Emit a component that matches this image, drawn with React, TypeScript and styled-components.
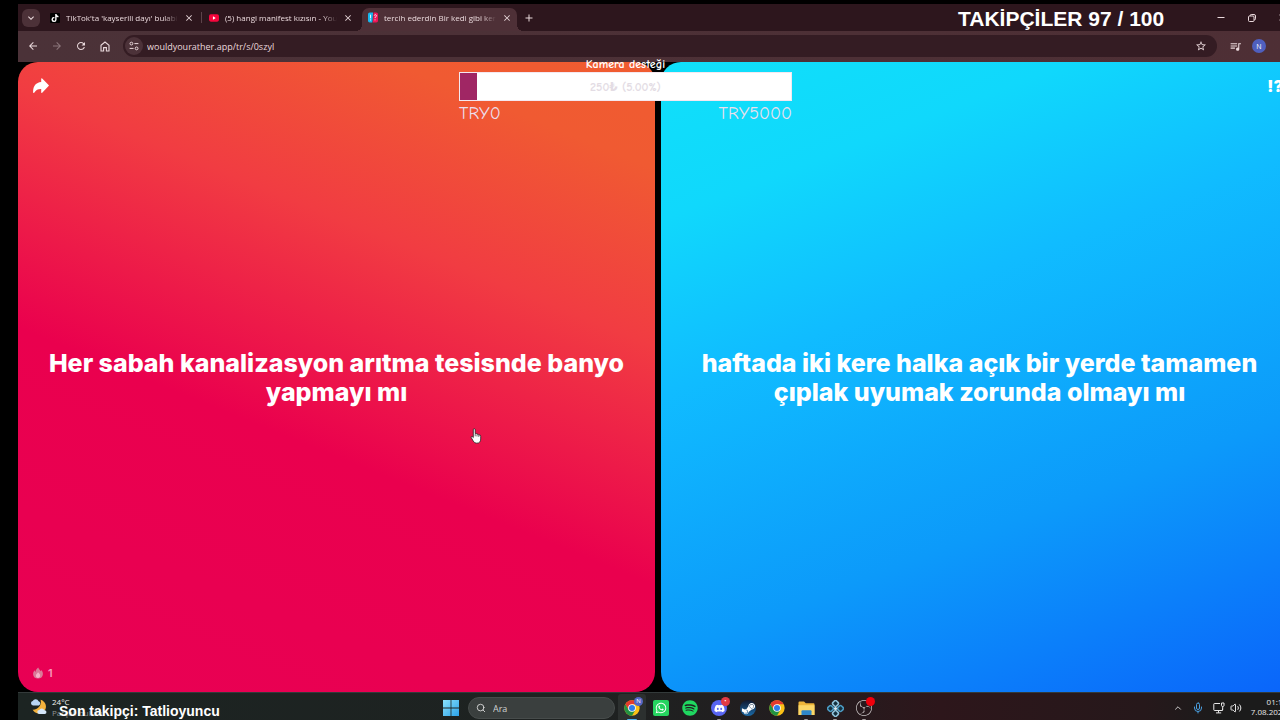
import React from "react";
import styled, { createGlobalStyle, css } from "styled-components";
import {
  MdArrowBack,
  MdArrowForward,
  MdRefresh,
  MdStarBorder,
  MdQueueMusic,
  MdClose,
  MdAdd,
  MdExpandMore,
  MdMoreVert,
} from "react-icons/md";
import { FaTiktok, FaWhatsapp, FaSpotify, FaDiscord, FaSteamSymbol } from "react-icons/fa";
import { SiObsstudio } from "react-icons/si";
import { ChevronUp, Mic, Volume2, Search } from "lucide-react";

const GlobalStyle = createGlobalStyle`
  * { box-sizing: border-box; }
  body { margin: 0; background: #000; overflow: hidden; }
  button, input { font: inherit; color: inherit; border: 0; padding: 0; margin: 0; background: none; }
  button { cursor: pointer; }
  p, h2 { margin: 0; }
  svg { display: block; flex: none; }
`;

const uiFont = `"Open Sans", "Noto Sans", sans-serif`;

const Stage = styled.div`
  position: relative;
  height: 100vh;
  padding: 4px 0 0 18px;
  overflow: hidden;
  background: #000;
`;

const Desktop = styled.div`
  display: grid;
  grid-template-rows: 27px 31px 1fr 32px;
  width: 100vw;
  height: 100vh;
  font-family: ${uiFont};
  color: #ead9dc;
`;

/* ---------- browser ---------- */

const TabStrip = styled.header`
  display: flex;
  align-items: center;
  padding-left: 4px;
  background: #2d161d;
`;

const TabSearch = styled.button`
  display: grid;
  place-items: center;
  width: 18px;
  height: 18px;
  border-radius: 6px;
  background: #4c3138;
`;

const Tabs = styled.nav`
  display: flex;
  align-self: flex-end;
  gap: 4px;
  margin-left: 4px;
`;

const Tab = styled.div<{ $active?: boolean; $divider?: boolean }>`
  position: relative;
  display: flex;
  align-items: center;
  gap: 6px;
  width: 155px;
  height: 23px;
  padding: 0 5px 4px 6px;
  border-radius: 7px 7px 0 0;
  ${(p) =>
    p.$active &&
    css`
      background: #4e3037;
      &::before,
      &::after {
        content: "";
        position: absolute;
        bottom: 0;
        width: 6px;
        height: 6px;
      }
      &::before {
        right: 100%;
        background: radial-gradient(circle at 0 0, transparent 6px, #4e3037 6px);
      }
      &::after {
        left: 100%;
        background: radial-gradient(circle at 100% 0, transparent 6px, #4e3037 6px);
      }
    `}
  ${(p) =>
    p.$divider &&
    css`
      &::after {
        content: "";
        position: absolute;
        right: -3px;
        top: 4px;
        width: 1px;
        height: 11px;
        background: #5d434a;
      }
    `}
`;

const TabTitle = styled.button`
  flex: 1;
  min-width: 0;
  overflow: hidden;
  white-space: nowrap;
  text-align: left;
  font-size: 8px;
  line-height: 14px;
  mask-image: linear-gradient(90deg, #000 88%, transparent);
`;

const IconButton = styled.button<{ $width?: number; $dim?: boolean }>`
  display: grid;
  place-items: center;
  flex: none;
  width: ${(p) => p.$width ?? 24}px;
  height: 20px;
  opacity: ${(p) => (p.$dim ? 0.4 : 1)};
`;

const WindowControls = styled.div`
  display: flex;
  margin-left: auto;
`;

const Toolbar = styled.div`
  display: flex;
  align-items: center;
  padding: 0 3px 1px;
  background: linear-gradient(90deg, #4b3238, #4e2f35);
`;

const AddressBar = styled.label`
  display: flex;
  align-items: center;
  flex: 1;
  height: 22px;
  margin: 0 6px;
  padding: 0 4px 0 2px;
  border-radius: 11px;
  background: #341c23;
`;

const SiteInfo = styled.button`
  display: grid;
  place-items: center;
  width: 18px;
  height: 18px;
  border-radius: 50%;
  background: #4c3239;
`;

const Address = styled.input`
  flex: 1;
  min-width: 0;
  margin-left: 4px;
  font-size: 9px;
  outline: 0;
`;

const Avatar = styled.span`
  display: grid;
  place-items: center;
  width: 14px;
  height: 14px;
  border-radius: 50%;
  background: #4f5fbe;
  font-size: 7px;
  color: #fff;
`;

/* ---------- page ---------- */

const Page = styled.main`
  display: grid;
  grid-template-columns: 1fr 1fr;
  gap: 6px;
  min-height: 0;
  background: #000;
`;

const Choice = styled.section<{ $side: "red" | "blue" }>`
  display: grid;
  grid-template-rows: 48px 1fr 46px;
  padding: 0 15px;
  border-radius: 20px;
  background: ${(p) =>
    p.$side === "red"
      ? "linear-gradient(202deg, #f05c30 0%, #f05a32 12%, #f13c42 32%, #ea004e 59%, #e80054 100%)"
      : "linear-gradient(159deg, #10e0fa 0%, #10d8fc 18%, #10bcff 38%, #0c9afa 68%, #0a64fa 100%)"};
  color: #fff;
  font-family: Inter, sans-serif;
`;

const CornerButton = styled.button<{ $end?: boolean }>`
  align-self: center;
  justify-self: ${(p) => (p.$end ? "end" : "start")};
  height: 18px;
  font-size: 16px;
  font-weight: 900;
  line-height: 18px;
`;

const Question = styled.button`
  width: 100%;
  padding: 0 8px;
  font-size: 25px;
  font-weight: 800;
  line-height: 29px;
  text-align: center;
`;

const Votes = styled.p`
  display: flex;
  align-items: center;
  gap: 5px;
  height: 20px;
  align-self: center;
  margin-top: 8px;
  font-size: 11px;
  font-weight: 600;
  color: #f79abb;
`;

/* ---------- taskbar ---------- */

const Taskbar = styled.footer`
  display: grid;
  grid-template-columns: 1fr auto 1fr;
  align-items: center;
  padding: 0 11px 0 10px;
  box-shadow: inset 0 1px #333a3a;
  background: linear-gradient(90deg, #1c2422 0%, #1e2221 45%, #221d1f 60%, #2d161b 72%, #26181b 88%, #1b1b1b 94%);
`;

const Weather = styled.div`
  display: flex;
  align-items: center;
  gap: 5px;
  padding: 0 0 2px 2px;
`;

const WeatherText = styled.div`
  font-size: 8px;
  line-height: 11px;
  color: #f0f0f0;
  small {
    display: block;
    font-size: 8px;
    color: #8f9493;
  }
`;

const Apps = styled.div`
  display: flex;
  align-items: center;
  gap: 1px;
`;

const AppButton = styled.button<{ $focused?: boolean; $running?: boolean }>`
  position: relative;
  display: grid;
  place-items: center;
  width: 28px;
  height: 28px;
  border-radius: 3px;
  background: ${(p) => (p.$focused ? "#2c302f" : "transparent")};
  &::after {
    content: "";
    display: ${(p) => (p.$focused || p.$running ? "block" : "none")};
    position: absolute;
    bottom: 1px;
    width: ${(p) => (p.$focused ? 10 : 4)}px;
    height: 2px;
    border-radius: 1px;
    background: ${(p) => (p.$focused ? "#4cb4f0" : "#a09a9a")};
  }
`;

const SearchBox = styled.label`
  display: flex;
  align-items: center;
  gap: 7px;
  width: 147px;
  height: 22px;
  margin: 0 2px;
  padding: 0 7px;
  border: 1px solid #474c4b;
  border-radius: 11px;
  background: #3a3f3e;
  color: #e4e4e4;
  input {
    width: 100%;
    font-size: 9px;
    outline: 0;
  }
  input::placeholder {
    color: #d0d2d2;
  }
`;

const Badge = styled.span<{ $color: string }>`
  position: absolute;
  top: 3px;
  right: 3px;
  display: grid;
  place-items: center;
  width: 9px;
  height: 9px;
  border-radius: 50%;
  background: ${(p) => p.$color};
  font-size: 6px;
  line-height: 9px;
  color: #fff;
`;

const Tile = styled.span<{ $bg: string; $round?: boolean }>`
  display: grid;
  place-items: center;
  width: 16px;
  height: 16px;
  border-radius: ${(p) => (p.$round ? "50%" : "2px")};
  background: ${(p) => p.$bg};
  color: #fff;
`;

const Tray = styled.div`
  display: flex;
  align-items: center;
  justify-content: flex-end;
  gap: 9px;
  color: #e8e8e8;
`;

const TrayPair = styled.div`
  display: flex;
  align-items: center;
  gap: 5px;
`;

const Clock = styled.time`
  padding-bottom: 2px;
  font-size: 8px;
  line-height: 10px;
  text-align: right;
`;

/* ---------- stream overlays ---------- */

const FollowerGoal = styled.h2`
  position: absolute;
  top: 7px;
  left: 958px;
  font: 700 21px/24px "Liberation Sans", Arial, sans-serif;
  color: #fff;
`;

const LatestFollower = styled.p`
  position: absolute;
  top: 703px;
  left: 59px;
  font: 700 14px/16px "Liberation Sans", Arial, sans-serif;
  color: #fff;
`;

const Goal = styled.section`
  position: absolute;
  top: 58px;
  left: 459px;
  width: 333px;
  font-family: "Comic Sans MS", "Comic Neue", "DejaVu Sans", sans-serif;
  color: #ecdfec;
`;

const GoalTitle = styled.h2`
  height: 14px;
  font-size: 12px;
  font-weight: 700;
  line-height: 13px;
  text-align: center;
  color: #fff;
`;

const GoalTrack = styled.div`
  position: relative;
  display: grid;
  place-items: center;
  height: 29px;
  border: 1px solid #f4e8f0;
  background: #fff;
  font-size: 12px;
  font-weight: 700;
  color: #e3dce4;
`;

const GoalFill = styled.div`
  position: absolute;
  inset: 0 auto 0 0;
  background: #a02664;
`;

const GoalRange = styled.div`
  display: flex;
  justify-content: space-between;
  font-size: 18px;
  line-height: 26px;
`;

const Pointer = styled.svg`
  position: absolute;
  left: 470px;
  top: 428px;
`;

/* ---------- drawings ---------- */

const ChromeLogo = () => (
  <svg width="16" height="16" viewBox="0 0 48 48">
    <circle cx="24" cy="24" r="23" fill="#fbc116" />
    <path d="M4.1 12.5A23 23 0 0 1 43.9 12.5L24 12.5 14 30Z" fill="#e33b2e" />
    <path d="M4.1 12.5A23 23 0 0 0 24 47L34 29.8 14 30Z" fill="#229342" />
    <circle cx="24" cy="24" r="11.5" fill="#fff" />
    <circle cx="24" cy="24" r="9" fill="#2f7de9" />
  </svg>
);

const WindowsLogo = () => (
  <svg width="16" height="16" viewBox="0 0 16 16">
    <defs>
      <linearGradient id="win" x2="1" y2="1">
        <stop stopColor="#8be0fb" />
        <stop offset="1" stopColor="#2ba3ea" />
      </linearGradient>
    </defs>
    <path fill="url(#win)" d="M0 0h7.6v7.6H0zM8.4 0H16v7.6H8.4zM0 8.4h7.6V16H0zM8.4 8.4H16V16H8.4z" />
  </svg>
);

const HomeIcon = () => (
  <svg width="10" height="11" viewBox="0 0 10 11" fill="none" stroke="currentColor" strokeWidth="1.1">
    <path d="M1 4.2 5 1l4 3.2V10H6.4V6.6H3.6V10H1Z" />
  </svg>
);

const TuneIcon = () => (
  <svg width="10" height="10" viewBox="0 0 10 10" fill="none" stroke="currentColor">
    <circle cx="2.4" cy="2.6" r="1.4" />
    <path d="M5.4 2.6H9.4M.6 7.4H4.6" />
    <circle cx="7.6" cy="7.4" r="1.4" />
  </svg>
);

const YoutubeIcon = () => (
  <svg width="10" height="10" viewBox="0 0 11 10">
    <rect y="1" width="11" height="8" rx="2" fill="#f5063c" />
    <path d="M4.3 3.2v3.6L7.4 5z" fill="#fff" />
  </svg>
);

const RatherIcon = () => (
  <svg width="10" height="11" viewBox="0 0 11 11">
    <path d="M2 0H5.6L4.8 11H2A2 2 0 0 1 0 9V2A2 2 0 0 1 2 0Z" fill="#17b7ee" />
    <path d="M6.2 0H9A2 2 0 0 1 11 2V9A2 2 0 0 1 9 11H5.4Z" fill="#ee1558" />
    <path d="M2.8 2.4v4M2.8 7.6v1.2M6.9 3.4c.2-1.4 2.5-1.3 2.3.2-.1 1-1.3 1-1.4 2.5M7.7 7.6v1" stroke="#fff" fill="none" />
  </svg>
);

const ShareArrow = () => (
  <svg width="16" height="16" viewBox="0 0 16 16" fill="#fff">
    <path d="M8.2 1Q8.3-.2 9.2.5L15.6 6.9Q16.2 7.5 15.6 8.1L9.2 14.7Q8.3 15.4 8.2 14.2V11C5 10.900 3 12 1.400 14.500Q.3 15.700.1 14.200C0 8.200 3 4.500 8.200 4.100Z" />
  </svg>
);

const Flame = () => (
  <svg width="10" height="12" viewBox="0 0 10 12">
    <path
      d="M5.2.5C5.6 2.2 7.2 2.8 7.6 4.3 8 3.9 8.2 3.4 8.2 2.9 9.5 4.3 10 5.7 9.9 7.2 9.8 9.9 7.7 11.6 5 11.6 2.2 11.6.2 9.8.1 7.2 0 5.5.8 4.2 1.7 3.2 1.8 4 2 4.600 2.500 5 2.600 3 3.700 1.700 5.200.5Z"
      fill="#d97a98"
    />
    <path d="M5.1 5.2C6.5 6.5 7.2 7.3 7.1 8.7 7 10.1 6.1 10.9 5 10.9S2.9 10.1 2.9 8.7C2.9 7.3 4 6.7 5.1 5.2Z" fill="#f5b3c9" />
  </svg>
);

const WeatherIcon = () => (
  <svg width="17" height="16" viewBox="0 0 17 16">
    <path d="M10.5.8A7 7 0 1 1 2.6 10.6 7.6 7.6 0 0 0 10.5.8Z" fill="#f3b13c" />
    <path d="M3 6.5a2.3 2.3 0 0 1-.3-4.5A3.3 3.3 0 0 1 8.6 2.3 2.2 2.2 0 0 1 8.8 6.5Z" fill="#b9d6f4" />
    <path d="M9.4 15a2 2 0 0 1-.2-4A2.9 2.9 0 0 1 14.4 11.2 1.9 1.9 0 0 1 14.7 15Z" fill="#d3e5f8" />
  </svg>
);

const FolderIcon = () => (
  <svg width="17" height="15" viewBox="0 0 17 15">
    <path d="M.5 1.5Q.5.5 1.5.5H6L7.8 2.3H15.5Q16.5 2.3 16.5 3.3V14H.5Z" fill="#eeb53a" />
    <path d="M.5 4.2H16.5V14H.5Z" fill="#fbd768" />
    <path d="M3.5 14V10.3Q3.5 9.3 4.5 9.3H12.5Q13.5 9.3 13.5 10.3V14Z" fill="#2e86c8" />
  </svg>
);

const PetalsIcon = () => (
  <svg width="17" height="17" viewBox="0 0 17 17" strokeWidth="1.6">
    <g fill="#14303f" stroke="#8fc3dc">
      <rect x="6" y="1" width="5" height="5" rx="1.5" transform="rotate(45 8.5 3.5)" />
      <rect x="6" y="11" width="5" height="5" rx="1.5" transform="rotate(45 8.5 13.5)" />
    </g>
    <g fill="#14303f" stroke="#4c9cc4">
      <rect x="1" y="6" width="5" height="5" rx="1.5" transform="rotate(45 3.5 8.5)" />
      <rect x="11" y="6" width="5" height="5" rx="1.5" transform="rotate(45 13.5 8.5)" />
    </g>
    <circle cx="8.5" cy="8.5" r="1.6" fill="#d6ecf6" />
  </svg>
);

const NetworkIcon = () => (
  <svg width="12" height="12" viewBox="0 0 12 12" fill="none" stroke="currentColor">
    <path d="M7 1.5H1.5Q.8 1.5.8 2.2V7.8Q.8 8.5 1.5 8.5H9.5V6.5M5.5 8.5V10.8M3 10.9H8.2" />
    <path d="M8.5 1V3.5Q8.5 4.5 9.7 4.5T11 3.5V1ZM9.7 4.5V8" />
  </svg>
);

const RestoreIcon = () => (
  <svg width="8" height="8" viewBox="0 0 8 8" fill="none" stroke="currentColor">
    <rect x=".5" y="2" width="5.5" height="5.5" rx="1" />
    <path d="M2.2 2V1.5Q2.2.5 3.2.5H6Q7.5.5 7.5 2V4.8Q7.5 5.8 6.5 5.8H6" />
  </svg>
);

const tabs = [
  {
    title: "TikTok'ta 'kayserili dayı' bulabilirsin",
    icon: (
      <svg width="10" height="10" viewBox="0 0 10 10">
        <rect width="10" height="10" rx="1" fill="#000" />
        <FaTiktok x="1" y="1" size={8} color="#fff" />
      </svg>
    ),
  },
  { title: "(5) hangi manifest kızısın - YouTube", icon: <YoutubeIcon /> },
  { title: "tercih ederdin Bir kedi gibi kendini", icon: <RatherIcon /> },
];

export default function App() {
  return (
    <Stage>
      <GlobalStyle />
      <Desktop>
        <TabStrip>
          <TabSearch aria-label="Sekmelerde ara">
            <MdExpandMore size={12} />
          </TabSearch>
          <Tabs>
            {tabs.map((tab, i) => (
              <Tab key={tab.title} $active={i === 2} $divider={i === 0}>
                {tab.icon}
                <TabTitle>{tab.title}</TabTitle>
                <IconButton $width={10} aria-label="Sekmeyi kapat">
                  <MdClose size={10} />
                </IconButton>
              </Tab>
            ))}
          </Tabs>
          <IconButton aria-label="Yeni sekme">
            <MdAdd size={12} />
          </IconButton>
          <WindowControls>
            <IconButton $width={31} aria-label="Simge durumuna küçült">
              <svg width="8" height="8" viewBox="0 0 8 8" stroke="currentColor">
                <path d="M.5 3.5H7.5" />
              </svg>
            </IconButton>
            <IconButton $width={31} aria-label="Önceki boyut">
              <RestoreIcon />
            </IconButton>
            <IconButton $width={31} aria-label="Kapat">
              <MdClose size={11} />
            </IconButton>
          </WindowControls>
        </TabStrip>

        <Toolbar>
          <IconButton aria-label="Geri">
            <MdArrowBack size={12} />
          </IconButton>
          <IconButton $dim aria-label="İleri">
            <MdArrowForward size={12} />
          </IconButton>
          <IconButton aria-label="Yenile">
            <MdRefresh size={12} />
          </IconButton>
          <IconButton aria-label="Ana sayfa">
            <HomeIcon />
          </IconButton>
          <AddressBar>
            <SiteInfo aria-label="Site bilgileri">
              <TuneIcon />
            </SiteInfo>
            <Address aria-label="Adres" defaultValue="wouldyourather.app/tr/s/0szyl" />
            <IconButton aria-label="Yer işareti ekle">
              <MdStarBorder size={12} />
            </IconButton>
          </AddressBar>
          <IconButton aria-label="Medya">
            <MdQueueMusic size={13} />
          </IconButton>
          <IconButton aria-label="Profil">
            <Avatar>N</Avatar>
          </IconButton>
          <IconButton aria-label="Menü">
            <MdMoreVert size={12} />
          </IconButton>
        </Toolbar>

        <Page>
          <Choice $side="red">
            <CornerButton aria-label="Paylaş">
              <ShareArrow />
            </CornerButton>
            <Question>Her sabah kanalizasyon arıtma tesisnde banyo yapmayı mı</Question>
            <Votes>
              <Flame />1
            </Votes>
          </Choice>
          <Choice $side="blue">
            <CornerButton $end>!?</CornerButton>
            <Question>haftada iki kere halka açık bir yerde tamamen çıplak uyumak zorunda olmayı mı</Question>
          </Choice>
        </Page>

        <Taskbar>
          <Weather>
            <WeatherIcon />
            <WeatherText>
              24°C
              <small>Parçalı bulutlu</small>
            </WeatherText>
          </Weather>
          <Apps>
            <AppButton aria-label="Başlat">
              <WindowsLogo />
            </AppButton>
            <SearchBox>
              <Search size={10} />
              <input aria-label="Ara" placeholder="Ara" />
            </SearchBox>
            <AppButton $focused aria-label="Chrome">
              <ChromeLogo />
              <Badge $color="#5566c4">N</Badge>
            </AppButton>
            <AppButton aria-label="WhatsApp">
              <Tile $bg="#25d45f">
                <FaWhatsapp size={12} />
              </Tile>
            </AppButton>
            <AppButton aria-label="Spotify">
              <FaSpotify size={16} color="#1fd760" />
            </AppButton>
            <AppButton $running aria-label="Discord">
              <Tile $bg="#5865f2" $round>
                <FaDiscord size={11} />
              </Tile>
              <Badge $color="#e23a45">•</Badge>
            </AppButton>
            <AppButton aria-label="Steam">
              <Tile $bg="linear-gradient(#10182e, #1a6aa8)" $round>
                <FaSteamSymbol size={15} />
              </Tile>
            </AppButton>
            <AppButton aria-label="Chrome">
              <ChromeLogo />
            </AppButton>
            <AppButton $running aria-label="Dosya Gezgini">
              <FolderIcon />
            </AppButton>
            <AppButton $running aria-label="Uygulama">
              <PetalsIcon />
            </AppButton>
            <AppButton $running aria-label="OBS Studio">
              <SiObsstudio size={16} color="#c9c4c4" />
              <Badge $color="#f0000c" />
            </AppButton>
          </Apps>
          <Tray>
            <ChevronUp size={10} />
            <Mic size={12} color="#4a9fe0" />
            <TrayPair>
              <NetworkIcon />
              <Volume2 size={12} />
            </TrayPair>
            <Clock>
              01:15
              <br />
              7.08.2025
            </Clock>
          </Tray>
        </Taskbar>
      </Desktop>

      <FollowerGoal>TAKİPÇİLER 97 / 100</FollowerGoal>
      <Goal>
        <GoalTitle>Kamera desteği</GoalTitle>
        <GoalTrack>
          <GoalFill style={{ width: "5%" }} />
          250₺ (5.00%)
        </GoalTrack>
        <GoalRange>
          <span>TRY0</span>
          <span>TRY5000</span>
        </GoalRange>
      </Goal>
      <LatestFollower>Son takipçi: Tatlioyuncu</LatestFollower>

      <Pointer width="12" height="16" viewBox="0 0 12 16">
        <path
          d="M3.3 1.7Q3.4.7 4.2.7T5.2 1.7V5.6Q6.7 5.1 7 6.2 8.3 5.7 8.7 6.8 10.7 6.5 10.7 8.4V11Q10.7 15.2 6.7 15.2 4.3 15.2 3.2 13L1.2 9.5Q1 8.2 2.2 8.5L3.3 9.6Z"
          fill="#fff"
          stroke="#222"
          strokeWidth=".8"
        />
        <path d="M5.2 6V8.3M7 6.4V8.5M8.8 7V8.9" stroke="#333" strokeWidth=".7" />
      </Pointer>
    </Stage>
  );
}
